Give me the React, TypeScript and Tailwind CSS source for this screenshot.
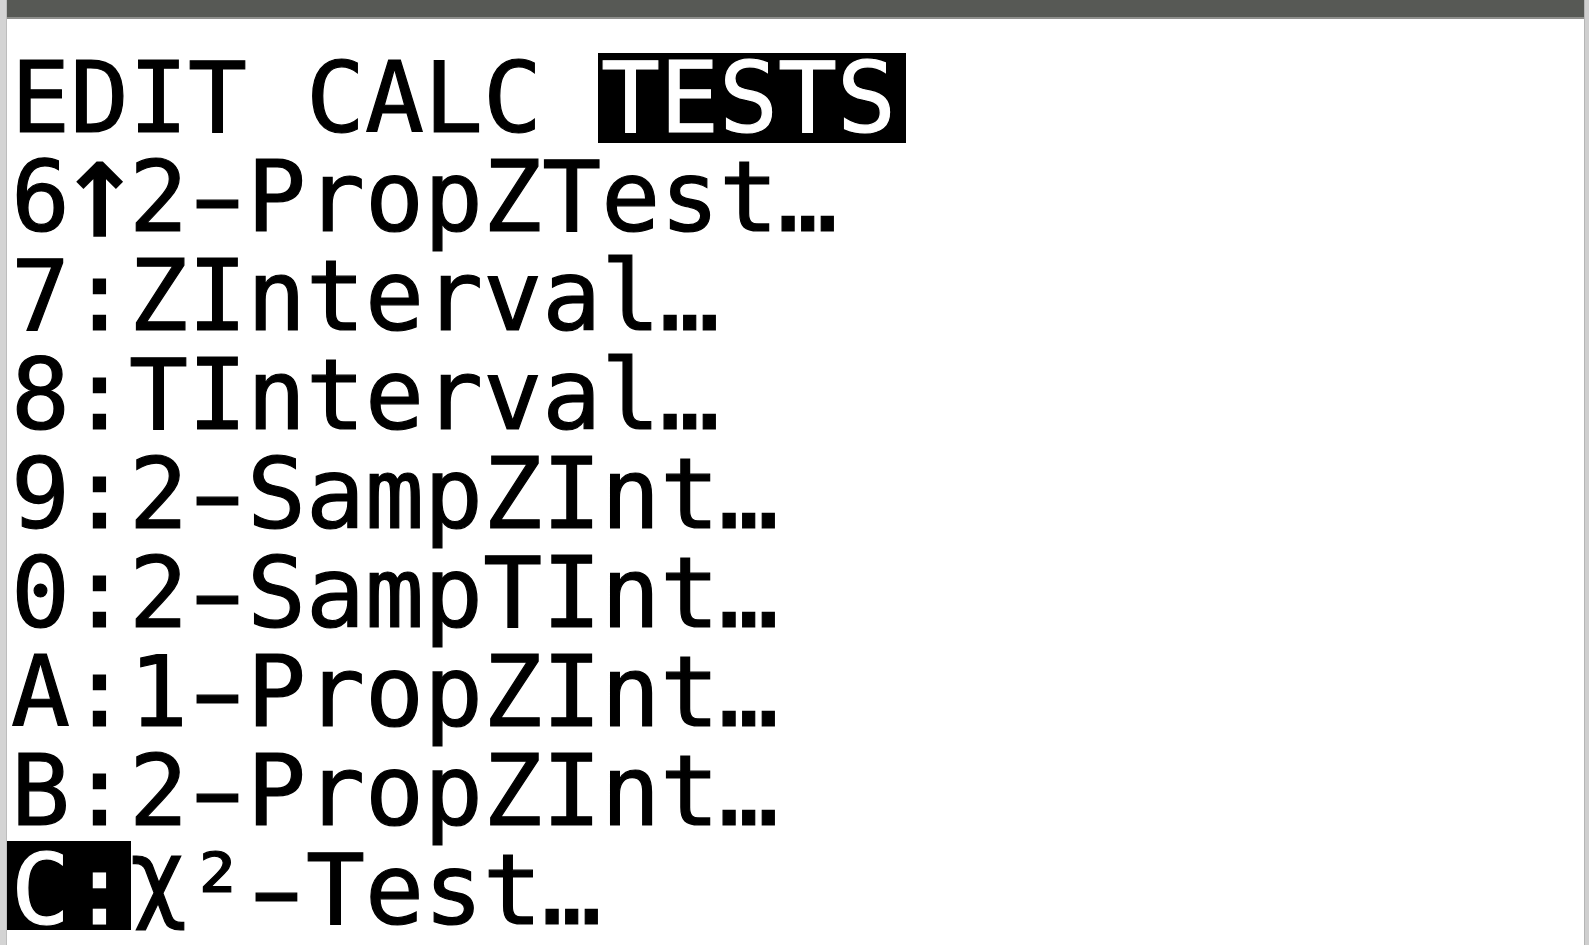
import React from "react";

const rows = [
  "6↑2-PropZTest…",
  "7:ZInterval…",
  "8:TInterval…",
  "9:2-SampZInt…",
  "0:2-SampTInt…",
  "A:1-PropZInt…",
  "B:2-PropZInt…",
];

// wide dash, tall arrow and raised chi, like the calculator font
function Glyphs({ text }: { text: string }) {
  return (
    <>
      {Array.from(text).map((ch, i) => {
        if (ch === "-")
          return (
            <span key={i} className="inline-block scale-x-[1.6]">
              -
            </span>
          );
        if (ch === "↑")
          return (
            <span key={i} className="inline-block w-[59px] text-center scale-[1.4] -translate-y-[8px]">
              ↑
            </span>
          );
        if (ch === "χ")
          return (
            <span key={i} className="inline-block -translate-y-[14px]">
              χ
            </span>
          );
        return ch;
      })}
    </>
  );
}

export default function App() {
  return (
    <div className="flex w-[1589px] h-[945px] bg-white overflow-hidden">
      <div className="w-[7px] h-full bg-[#d4d4d4] border-r border-[#bdbdbd]" />
      <div className="flex-1 flex flex-col">
        <div className="h-[19px] bg-[#575955] border-b-2 border-[#8e8f8c]" />
        <div
          className="pt-[30px] pl-[4px] text-black text-[98px] leading-[99px] whitespace-pre [-webkit-text-stroke-width:1.2px]"
          style={{ fontFamily: '"DejaVu Sans Mono", monospace' }}
        >
          <div className="h-[99px]">
            EDIT CALC{" "}
            <span className="inline-block h-[90px] leading-[90px] -ml-[3px] pl-[3px] pr-[10px] bg-black text-white">
              TESTS
            </span>
          </div>
          {rows.map((r) => (
            <div key={r} className="h-[99px]">
              <Glyphs text={r} />
            </div>
          ))}
          <div className="h-[99px]">
            <span className="inline-block h-[89px] leading-[98px] -ml-[4px] pl-[4px] pr-[2px] -mr-[2px] bg-black text-white">
              C:
            </span>
            <Glyphs text="χ²-Test…" />
          </div>
        </div>
      </div>
      <div className="w-[5px] h-full bg-[#cfcfcf] border-l border-[#b5b5b5]" />
    </div>
  );
}
